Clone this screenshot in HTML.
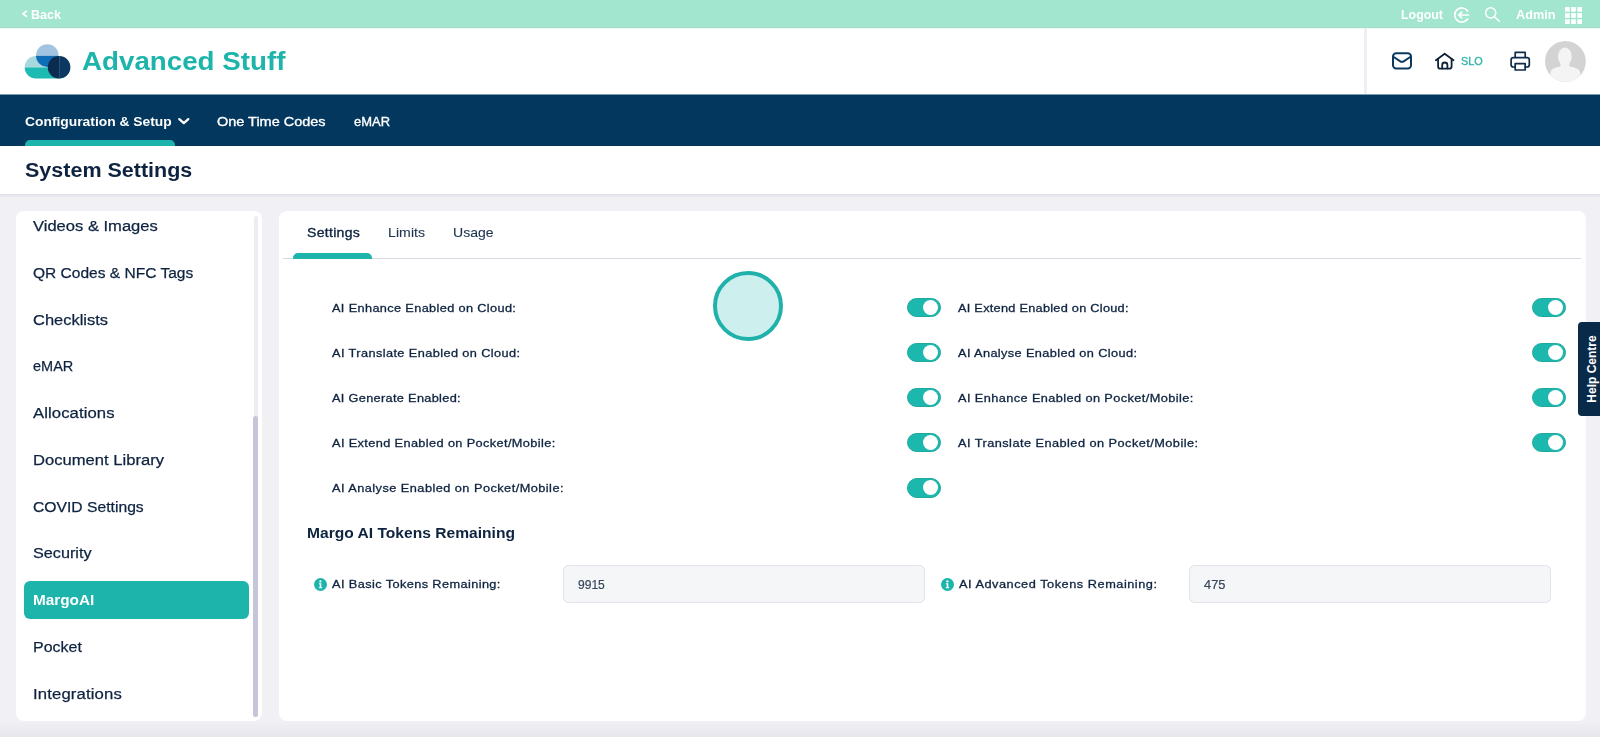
<!DOCTYPE html>
<html>
<head>
<meta charset="utf-8">
<title>System Settings</title>
<style>
*{box-sizing:border-box;margin:0;padding:0}
html,body{width:1600px;height:737px;overflow:hidden}
body{font-family:"Liberation Sans",sans-serif;background:#f0f0f5;position:relative;color:#0e2340}
.abs{position:absolute}
.t{position:absolute;white-space:nowrap;line-height:20px;height:20px;transform-origin:0 50%}
#topbar{left:0;top:0;width:1600px;height:28px;background:#a2e6cf;border-bottom:1px solid #a8ddcb}
#header{left:0;top:28px;width:1600px;height:66px;background:#fff}
#nav{left:0;top:94px;width:1600px;height:52px;border-top:1px solid #7f9bb0;background:#03375e}
#titlebar{left:0;top:146px;width:1600px;height:48px;background:#fff}
#sidebar{left:16px;top:211px;width:246px;height:510px;background:#fff;border-radius:8px}
#main{left:279px;top:211px;width:1307px;height:510px;background:#fff;border-radius:8px}
.tog{position:absolute;width:34px;height:19.5px;border-radius:10px;background:#1cb8ad;border:1px solid #1fa99e}
.tog::after{content:"";position:absolute;right:1.7px;top:1.2px;width:15px;height:15px;border-radius:50%;background:#fff}
.inp{position:absolute;height:38px;width:362px;background:#f5f6f8;border:1px solid #e2e3ea;border-radius:5.5px}
svg{position:absolute;overflow:visible}
</style>
</head>
<body>
<div id="topbar" class="abs"></div>
<div id="header" class="abs"></div>
<div class="abs" style="left:0;top:28px;width:1600px;height:1px;background:#e9f8f3"></div>
<div id="nav" class="abs"></div>
<div id="titlebar" class="abs"></div>
<div class="abs" style="left:0;top:194px;width:1600px;height:1px;background:#dedee8"></div>
<div class="abs" style="left:0;top:195px;width:1600px;height:2px;background:#e8e8f0"></div>
<div class="abs" style="left:0;top:721px;width:1600px;height:16px;background:linear-gradient(#f0f0f5,#e6e6ec)"></div>

<!-- top bar icons -->
<svg style="left:0;top:0" width="1600" height="28" viewBox="0 0 1600 28" fill="none" stroke="#fff" stroke-linecap="round" stroke-linejoin="round">
  <path d="M26.5 11.3 L22.8 13.8 L26.5 16.3" stroke-width="1.7"/>
  <!-- logout -->
  <path d="M1467.6 11 A7.05 7.05 0 1 0 1467.6 19" stroke-width="1.7"/>
  <path d="M1458.8 15 H1468.6 M1461.7 12.1 L1458.7 15 L1461.7 17.9" stroke-width="1.7"/>
  <!-- search -->
  <circle cx="1490.7" cy="12.8" r="5.1" stroke-width="1.5"/>
  <path d="M1494.5 16.7 L1499.3 21.4" stroke-width="1.5"/>
</svg>
<svg style="left:1565px;top:6.5px" width="17" height="17" viewBox="0 0 17 17" fill="#fff">
  <rect x="0" y="0" width="4.7" height="4.7"/><rect x="6.15" y="0" width="4.7" height="4.7"/><rect x="12.3" y="0" width="4.7" height="4.7"/>
  <rect x="0" y="6.15" width="4.7" height="4.7"/><rect x="6.15" y="6.15" width="4.7" height="4.7"/><rect x="12.3" y="6.15" width="4.7" height="4.7"/>
  <rect x="0" y="12.3" width="4.7" height="4.7"/><rect x="6.15" y="12.3" width="4.7" height="4.7"/><rect x="12.3" y="12.3" width="4.7" height="4.7"/>
</svg>

<!-- logo -->
<svg style="left:0;top:28px" width="100" height="66" viewBox="0 28 100 66">
  <defs>
    <clipPath id="cTop"><circle cx="47.3" cy="55.6" r="11.3"/></clipPath>
    <clipPath id="cPill"><rect x="24.7" y="56" width="45" height="22.6" rx="11.3"/></clipPath>
    <clipPath id="cDark"><circle cx="59.1" cy="67.2" r="11.3"/></clipPath>
  </defs>
  <g clip-path="url(#cPill)"><rect x="20" y="56" width="60" height="11.4" fill="#a6d8dc"/><rect x="20" y="67.4" width="60" height="12" fill="#1cbab2"/></g>
  <g clip-path="url(#cTop)"><rect x="30" y="44" width="40" height="11.8" fill="#a3c4e0"/><rect x="30" y="55.8" width="40" height="12" fill="#0f6cb6"/></g>
  <g clip-path="url(#cDark)"><rect x="47" y="55" width="12.2" height="25" fill="#0b2c50"/><rect x="59.2" y="55" width="12" height="25" fill="#0d3862"/><rect x="59" y="55" width="0.5" height="25" fill="#1f6078"/></g>
</svg>

<!-- header right -->
<div class="abs" style="left:1364px;top:28px;width:3px;height:66px;background:#eeeef4"></div>
<svg style="left:1380px;top:40px" width="220" height="50" viewBox="1380 40 220 50" fill="none" stroke-linecap="round" stroke-linejoin="round">
  <!-- mail -->
  <rect x="1393" y="53.2" width="18" height="15.3" rx="3.2" stroke="#0b3a60" stroke-width="2"/>
  <path d="M1393.8 57 L1399.9 61.1 Q1402 62.5 1404.1 61.1 L1410.2 57" stroke="#0b3a60" stroke-width="1.9"/>
  <!-- home -->
  <path d="M1435.9 60.3 L1444.7 53.7 L1453.5 60.3" stroke="#0f2238" stroke-width="1.8"/>
  <path d="M1438.1 58.8 V66.4 Q1438.1 68.6 1440.3 68.6 H1449.4 Q1451.6 68.6 1451.6 66.4 V58.8" stroke="#0f2238" stroke-width="1.8"/>
  <path d="M1442.2 68.4 V65 Q1442.2 62.5 1444.8 62.5 Q1447.4 62.5 1447.4 65 V68.4" stroke="#0f2238" stroke-width="1.8"/>
  <!-- printer -->
  <path d="M1515.2 57.3 V52.4 H1525.2 V57.3" stroke="#0f2d4a" stroke-width="1.7"/>
  <path d="M1515.2 67 H1513.4 Q1511.1 67 1511.1 64.7 V59.9 Q1511.1 57.6 1513.4 57.6 H1527 Q1529.3 57.6 1529.3 59.9 V64.7 Q1529.3 67 1527 67 H1525.2" stroke="#0f2d4a" stroke-width="1.7"/>
  <rect x="1515.2" y="63.6" width="10" height="6.4" stroke="#0f2d4a" stroke-width="1.7"/>
</svg>
<!-- avatar -->
<svg style="left:1545px;top:40.8px" width="40.8" height="40.8" viewBox="0 0 40.8 40.8">
  <defs><clipPath id="av"><circle cx="20.4" cy="20.4" r="20.4"/></clipPath></defs>
  <circle cx="20.4" cy="20.4" r="20.4" fill="#d3d3d3"/>
  <g clip-path="url(#av)" fill="#f4f4f4">
    <ellipse cx="19.9" cy="15.6" rx="6.9" ry="9"/><rect x="15.5" y="20" width="8.8" height="8"/>
    <path d="M5.3 42 V33 Q5.3 27.5 12 26.2 L16 25.2 Q20 27 24 25.2 L28 26.2 Q35.4 27.5 35.4 33 V42 Z"/>
  </g>
</svg>

<!-- nav -->
<div class="abs" style="left:24.5px;top:140px;width:150.5px;height:6px;background:#1db4ab;border-radius:5px 5px 0 0"></div>
<svg style="left:178px;top:116px" width="14" height="12" viewBox="178 116 14 12" fill="none" stroke="#fff" stroke-width="2.3" stroke-linecap="round" stroke-linejoin="round"><path d="M1.3 3.1 L5.8 7.1 L10.3 3.1" transform="translate(178 116)"/></svg>

<!-- sidebar -->
<div id="sidebar" class="abs"></div>
<div class="abs" style="left:24.4px;top:581px;width:224.6px;height:38px;background:#1db4ab;border-radius:6px"></div>
<div class="abs" style="left:253.6px;top:216px;width:4.8px;height:501px;background:#ececf3;border-radius:2px"></div>
<div class="abs" style="left:253.4px;top:416px;width:5px;height:301px;background:#c6c6d8;border-radius:2.5px"></div>

<!-- main -->
<div id="main" class="abs"></div>
<div class="abs" style="left:283px;top:257.5px;width:1298px;height:1.3px;background:#d9d9e3"></div>
<div class="abs" style="left:292.7px;top:253px;width:79.6px;height:6px;background:#1db4ab;border-radius:5px 5px 0 0"></div>
<div class="abs" style="left:713.2px;top:271px;width:70px;height:70px;border-radius:50%;background:#cdf0ee;border:4px solid #20b2aa"></div>

<div class="tog" style="left:907px;top:297.50px"></div>
<div class="tog" style="left:907px;top:342.60px"></div>
<div class="tog" style="left:907px;top:387.70px"></div>
<div class="tog" style="left:907px;top:432.80px"></div>
<div class="tog" style="left:907px;top:478.00px"></div>
<div class="tog" style="left:1532px;top:297.50px"></div>
<div class="tog" style="left:1532px;top:342.60px"></div>
<div class="tog" style="left:1532px;top:387.70px"></div>
<div class="tog" style="left:1532px;top:432.80px"></div>


<!-- info icons -->
<svg style="left:314px;top:577.5px" width="13" height="13" viewBox="0 0 13 13"><circle cx="6.5" cy="6.5" r="6.5" fill="#1db4ab"/><circle cx="6.4" cy="3.4" r="1.1" fill="#fff"/><path d="M4.9 5.3 H7.3 V9.3 H8.2 V10.3 H4.8 V9.3 H5.7 V6.3 H4.9 Z" fill="#fff"/></svg>
<svg style="left:940.6px;top:577.5px" width="13" height="13" viewBox="0 0 13 13"><circle cx="6.5" cy="6.5" r="6.5" fill="#1db4ab"/><circle cx="6.4" cy="3.4" r="1.1" fill="#fff"/><path d="M4.9 5.3 H7.3 V9.3 H8.2 V10.3 H4.8 V9.3 H5.7 V6.3 H4.9 Z" fill="#fff"/></svg>
<div class="inp" style="left:563px;top:565px"></div>
<div class="inp" style="left:1189px;top:565px;width:362px"></div>

<div class="abs" style="left:0;top:0;width:1600px;height:737px;will-change:transform">
<div class="t" style="left:30.90px;top:5.00px;font-size:13px;font-weight:bold;color:#fff;transform:scaleX(0.9653);">Back</div>
<div class="t" style="left:1400.60px;top:5.00px;font-size:13px;font-weight:bold;color:#fff;transform:scaleX(0.9535);">Logout</div>
<div class="t" style="left:1515.50px;top:5.00px;font-size:13px;font-weight:bold;color:#fff;transform:scaleX(0.9764);">Admin</div>
<div class="t" style="left:81.80px;top:51.00px;font-size:26px;font-weight:bold;color:#1db4ab;transform:scaleX(1.0667);">Advanced Stuff</div>
<div class="t" style="left:1460.60px;top:51.00px;font-size:10.5px;font-weight:normal;color:#2bb5a8;transform:scaleX(1.0373);-webkit-text-stroke:0.3px #2bb5a8;">SLO</div>
<div class="t" style="left:24.50px;top:112.00px;font-size:13.5px;font-weight:bold;color:#fff;transform:scaleX(1.0242);">Configuration &amp; Setup</div>
<div class="t" style="left:217.00px;top:112.00px;font-size:13.5px;font-weight:normal;color:#fff;transform:scaleX(1.0711);-webkit-text-stroke:0.35px #fff;">One Time Codes</div>
<div class="t" style="left:353.80px;top:112.00px;font-size:13.5px;font-weight:normal;color:#fff;transform:scaleX(0.9596);-webkit-text-stroke:0.35px #fff;">eMAR</div>
<div class="t" style="left:25.20px;top:160.00px;font-size:20px;font-weight:bold;color:#0e2340;transform:scaleX(1.0751);">System Settings</div>
<div class="t" style="left:33.20px;top:216.00px;font-size:15.2px;font-weight:normal;color:#0e2340;transform:scaleX(1.0895);-webkit-text-stroke:0.25px #0e2340;">Videos &amp; Images</div>
<div class="t" style="left:33.20px;top:263.00px;font-size:15.2px;font-weight:normal;color:#0e2340;transform:scaleX(1.0222);-webkit-text-stroke:0.25px #0e2340;">QR Codes &amp; NFC Tags</div>
<div class="t" style="left:33.20px;top:310.00px;font-size:15.2px;font-weight:normal;color:#0e2340;transform:scaleX(1.0835);-webkit-text-stroke:0.25px #0e2340;">Checklists</div>
<div class="t" style="left:33.20px;top:356.00px;font-size:15.2px;font-weight:normal;color:#0e2340;transform:scaleX(0.9549);-webkit-text-stroke:0.25px #0e2340;">eMAR</div>
<div class="t" style="left:33.20px;top:403.00px;font-size:15.2px;font-weight:normal;color:#0e2340;transform:scaleX(1.1000);letter-spacing:0.064px;-webkit-text-stroke:0.25px #0e2340;">Allocations</div>
<div class="t" style="left:33.20px;top:450.00px;font-size:15.2px;font-weight:normal;color:#0e2340;transform:scaleX(1.0928);-webkit-text-stroke:0.25px #0e2340;">Document Library</div>
<div class="t" style="left:33.20px;top:497.00px;font-size:15.2px;font-weight:normal;color:#0e2340;transform:scaleX(1.0326);-webkit-text-stroke:0.25px #0e2340;">COVID Settings</div>
<div class="t" style="left:33.20px;top:543.00px;font-size:15.2px;font-weight:normal;color:#0e2340;transform:scaleX(1.0679);-webkit-text-stroke:0.25px #0e2340;">Security</div>
<div class="t" style="left:33.20px;top:590.00px;font-size:15.2px;font-weight:bold;color:#fff;transform:scaleX(1.0091);">MargoAI</div>
<div class="t" style="left:33.20px;top:637.00px;font-size:15.2px;font-weight:normal;color:#0e2340;transform:scaleX(1.0530);-webkit-text-stroke:0.25px #0e2340;">Pocket</div>
<div class="t" style="left:33.20px;top:684.00px;font-size:15.2px;font-weight:normal;color:#0e2340;transform:scaleX(1.1000);letter-spacing:0.123px;-webkit-text-stroke:0.25px #0e2340;">Integrations</div>
<div class="t" style="left:306.50px;top:223.00px;font-size:12.8px;font-weight:normal;color:#0e2340;transform:scaleX(1.1000);letter-spacing:0.263px;-webkit-text-stroke:0.35px #0e2340;">Settings</div>
<div class="t" style="left:387.60px;top:223.00px;font-size:12.8px;font-weight:normal;color:#1f3350;transform:scaleX(1.1000);letter-spacing:0.061px;-webkit-text-stroke:0.1px #1f3350;">Limits</div>
<div class="t" style="left:453.40px;top:223.00px;font-size:12.8px;font-weight:normal;color:#1f3350;transform:scaleX(1.0973);-webkit-text-stroke:0.1px #1f3350;">Usage</div>
<div class="t" style="left:332.00px;top:298.00px;font-size:11.6px;font-weight:normal;color:#0e2340;transform:scaleX(1.1000);letter-spacing:0.319px;-webkit-text-stroke:0.3px #0e2340;">AI Enhance Enabled on Cloud:</div>
<div class="t" style="left:332.00px;top:343.00px;font-size:11.6px;font-weight:normal;color:#0e2340;transform:scaleX(1.1000);letter-spacing:0.363px;-webkit-text-stroke:0.3px #0e2340;">AI Translate Enabled on Cloud:</div>
<div class="t" style="left:332.00px;top:388.00px;font-size:11.6px;font-weight:normal;color:#0e2340;transform:scaleX(1.1000);letter-spacing:0.284px;-webkit-text-stroke:0.3px #0e2340;">AI Generate Enabled:</div>
<div class="t" style="left:332.00px;top:433.00px;font-size:11.6px;font-weight:normal;color:#0e2340;transform:scaleX(1.1000);letter-spacing:0.338px;-webkit-text-stroke:0.3px #0e2340;">AI Extend Enabled on Pocket/Mobile:</div>
<div class="t" style="left:332.00px;top:478.00px;font-size:11.6px;font-weight:normal;color:#0e2340;transform:scaleX(1.1000);letter-spacing:0.415px;-webkit-text-stroke:0.3px #0e2340;">AI Analyse Enabled on Pocket/Mobile:</div>
<div class="t" style="left:958.00px;top:298.00px;font-size:11.6px;font-weight:normal;color:#0e2340;transform:scaleX(1.1000);letter-spacing:0.235px;-webkit-text-stroke:0.3px #0e2340;">AI Extend Enabled on Cloud:</div>
<div class="t" style="left:958.00px;top:343.00px;font-size:11.6px;font-weight:normal;color:#0e2340;transform:scaleX(1.1000);letter-spacing:0.345px;-webkit-text-stroke:0.3px #0e2340;">AI Analyse Enabled on Cloud:</div>
<div class="t" style="left:958.00px;top:388.00px;font-size:11.6px;font-weight:normal;color:#0e2340;transform:scaleX(1.1000);letter-spacing:0.364px;-webkit-text-stroke:0.3px #0e2340;">AI Enhance Enabled on Pocket/Mobile:</div>
<div class="t" style="left:958.00px;top:433.00px;font-size:11.6px;font-weight:normal;color:#0e2340;transform:scaleX(1.1000);letter-spacing:0.412px;-webkit-text-stroke:0.3px #0e2340;">AI Translate Enabled on Pocket/Mobile:</div>
<div class="t" style="left:307.40px;top:523.00px;font-size:15px;font-weight:bold;color:#0e2340;transform:scaleX(1.0398);">Margo AI Tokens Remaining</div>
<div class="t" style="left:332.00px;top:574.00px;font-size:11.6px;font-weight:normal;color:#0e2340;transform:scaleX(1.1000);letter-spacing:0.358px;-webkit-text-stroke:0.3px #0e2340;">AI Basic Tokens Remaining:</div>
<div class="t" style="left:958.60px;top:574.00px;font-size:11.6px;font-weight:normal;color:#0e2340;transform:scaleX(1.1000);letter-spacing:0.474px;-webkit-text-stroke:0.3px #0e2340;">AI Advanced Tokens Remaining:</div>
<div class="t" style="left:577.70px;top:575.00px;font-size:12.8px;font-weight:normal;color:#35465b;transform:scaleX(0.9414);-webkit-text-stroke:0.2px #35465b;">9915</div>
<div class="t" style="left:1204.00px;top:575.00px;font-size:12.8px;font-weight:normal;color:#35465b;transform:scaleX(1.0019);-webkit-text-stroke:0.2px #35465b;">475</div>
</div>

<!-- help centre -->
<div class="abs" style="left:1578px;top:321.7px;width:22px;height:94.5px;background:#0a2a4a;border-radius:4px 0 0 4px"></div>
<div class="abs" style="left:1592px;top:368.6px;width:0;height:0"><div style="position:absolute;white-space:nowrap;transform:translate(-50%,-50%) rotate(-90deg);color:#fff;font-size:12px;font-weight:bold">Help Centre</div></div>
</body>
</html>
